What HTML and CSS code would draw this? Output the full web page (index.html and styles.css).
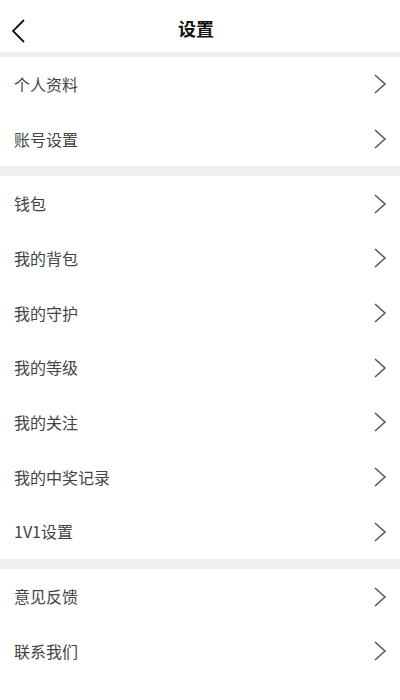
FILE: index.html
```html
<!DOCTYPE html>
<html lang="zh">
<head>
<meta charset="utf-8">
<link rel="stylesheet" href="styles.css">
</head>
<body>
<div class="page">
  <header class="nav">
    <svg class="back" width="18" height="26" viewBox="0 0 18 26"><polyline points="14,2 3,13 14,24" fill="none" stroke="#111" stroke-width="1.8" stroke-linejoin="miter"/></svg>
    <h1 class="title">设置</h1>
  </header>
  <div class="gap gap-s"></div>
  <ul class="group">
    <li class="row"><span>个人资料</span><svg class="chev" width="16" height="22" viewBox="0 0 16 22"><polyline points="3,2 13,11 3,20" fill="none" stroke="#555" stroke-width="1.5"/></svg></li>
    <li class="row"><span>账号设置</span><svg class="chev" width="16" height="22" viewBox="0 0 16 22"><polyline points="3,2 13,11 3,20" fill="none" stroke="#555" stroke-width="1.5"/></svg></li>
  </ul>
  <div class="gap"></div>
  <ul class="group">
    <li class="row"><span>钱包</span><svg class="chev" width="16" height="22" viewBox="0 0 16 22"><polyline points="3,2 13,11 3,20" fill="none" stroke="#555" stroke-width="1.5"/></svg></li>
    <li class="row"><span>我的背包</span><svg class="chev" width="16" height="22" viewBox="0 0 16 22"><polyline points="3,2 13,11 3,20" fill="none" stroke="#555" stroke-width="1.5"/></svg></li>
    <li class="row"><span>我的守护</span><svg class="chev" width="16" height="22" viewBox="0 0 16 22"><polyline points="3,2 13,11 3,20" fill="none" stroke="#555" stroke-width="1.5"/></svg></li>
    <li class="row"><span>我的等级</span><svg class="chev" width="16" height="22" viewBox="0 0 16 22"><polyline points="3,2 13,11 3,20" fill="none" stroke="#555" stroke-width="1.5"/></svg></li>
    <li class="row"><span>我的关注</span><svg class="chev" width="16" height="22" viewBox="0 0 16 22"><polyline points="3,2 13,11 3,20" fill="none" stroke="#555" stroke-width="1.5"/></svg></li>
    <li class="row"><span>我的中奖记录</span><svg class="chev" width="16" height="22" viewBox="0 0 16 22"><polyline points="3,2 13,11 3,20" fill="none" stroke="#555" stroke-width="1.5"/></svg></li>
    <li class="row"><span>1V1设置</span><svg class="chev" width="16" height="22" viewBox="0 0 16 22"><polyline points="3,2 13,11 3,20" fill="none" stroke="#555" stroke-width="1.5"/></svg></li>
  </ul>
  <div class="gap"></div>
  <ul class="group">
    <li class="row"><span>意见反馈</span><svg class="chev" width="16" height="22" viewBox="0 0 16 22"><polyline points="3,2 13,11 3,20" fill="none" stroke="#555" stroke-width="1.5"/></svg></li>
    <li class="row"><span>联系我们</span><svg class="chev" width="16" height="22" viewBox="0 0 16 22"><polyline points="3,2 13,11 3,20" fill="none" stroke="#555" stroke-width="1.5"/></svg></li>
  </ul>
</div>
</body>
</html>
```
FILE: styles.css
```css
html, body {
  margin: 0;
  padding: 0;
  background: #fff;
}
body {
  font-family: "Noto Sans CJK SC", "Noto Sans", "Liberation Sans", sans-serif;
  color: #444;
}
.page {
  width: 400px;
  display: flex;
  flex-direction: column;
}
.nav {
  height: 52px;
  display: flex;
  align-items: center;
  justify-content: center;
  position: relative;
}
.back {
  position: absolute;
  left: 10px;
  top: 18px;
}
.title {
  margin: 0;
  font-size: 18px;
  font-weight: 700;
  color: #111;
  line-height: 1;
  margin-left: -8px;
  margin-top: 4px;
}
.gap {
  height: 10px;
  background: #efeff2;
}
.gap-s {
  height: 5px;
}
.group {
  list-style: none;
  margin: 0;
  padding: 0;
}
.row {
  height: 54.7px;
  display: flex;
  align-items: center;
  justify-content: space-between;
  padding: 0 12px 0 14px;
  font-size: 16px;
  color: #444;
}
.row span {
  line-height: 1;
  margin-top: -1px;
}
.chev {
  display: block;
}
```
